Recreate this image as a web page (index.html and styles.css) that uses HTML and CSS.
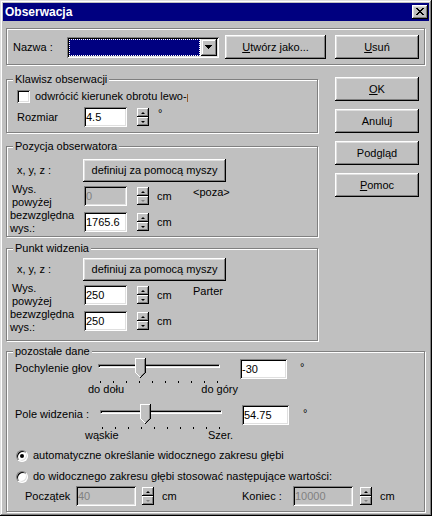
FILE: index.html
```html
<!DOCTYPE html>
<html lang="pl">
<head>
    <meta charset="UTF-8">
    <title>Obserwacja</title>
    <link rel="stylesheet" href="styles.css">
</head>
<body>
<div class="window">
    <div class="titlebar">
        <span class="title">Obserwacja</span>
        <button class="close-btn">
            <svg width="8" height="7" viewBox="0 0 8 7" shape-rendering="crispEdges"><path d="M0 0h2v1H0zM6 0h2v1H6zM1 1h2v1H1zM5 1h2v1H5zM2 2h4v1H2zM3 3h2v1H3zM2 4h4v1H2zM1 5h2v1H1zM5 5h2v1H5zM0 6h2v1H0zM6 6h2v1H6z"/></svg>
        </button>
    </div>

    <div class="content">
        <div class="group top-box">
            <span class="lbl name-lbl">Nazwa :</span>
            <div class="combo">
                <div class="combo-value"></div>
                <div class="combo-btn">
                    <svg width="7" height="4" viewBox="0 0 7 4" shape-rendering="crispEdges"><path d="M0 0h7v1H0zM1 1h5v1H1zM2 2h3v1H2zM3 3h1v1H3z"/></svg>
                </div>
            </div>
            <button class="btn btn-create"><u>U</u>twórz jako...</button>
            <button class="btn btn-delete"><u>U</u>suń</button>
        </div>

        <div class="middle">
            <div class="left-col">
                <div class="group key-box">
                    <span class="group-label">Klawisz obserwacji</span>
                    <div class="check-row">
                        <span class="checkbox"></span>
                        <span class="check-text">odwrócić kierunek obrotu lewo-prawo</span>
                    </div>
                    <div class="row">
                        <span class="lbl size-lbl">Rozmiar</span>
                        <input class="field w-num" type="text" value="4.5">
                        <div class="spin">
                            <span class="spin-part"><i class="arr-up"></i></span>
                            <span class="spin-part"><i class="arr-down"></i></span>
                        </div>
                        <span class="unit deg">°</span>
                    </div>
                </div>

                <div class="group pos-box">
                    <span class="group-label">Pozycja obserwatora</span>
                    <div class="btn-row">
                        <span class="lbl xyz-lbl">x, y, z :</span>
                        <button class="btn btn-mouse">definiuj za pomocą myszy</button>
                    </div>
                    <div class="row">
                        <span class="lbl two-line wys-lbl">Wys.<br>powyżej</span>
                        <input class="field w-num" type="text" value="0" disabled>
                        <div class="spin">
                            <span class="spin-part"><i class="arr-up"></i></span>
                            <span class="spin-part"><i class="arr-down dim"></i></span>
                        </div>
                        <span class="unit cm">cm</span>
                        <span class="note">&lt;poza&gt;</span>
                    </div>
                    <div class="row row-abs">
                        <span class="lbl two-line abs-lbl">bezwzględna<br>wys.:</span>
                        <input class="field w-num" type="text" value="1765.6">
                        <div class="spin">
                            <span class="spin-part"><i class="arr-up"></i></span>
                            <span class="spin-part"><i class="arr-down"></i></span>
                        </div>
                        <span class="unit cm">cm</span>
                    </div>
                </div>

                <div class="group view-box">
                    <span class="group-label">Punkt widzenia</span>
                    <div class="btn-row">
                        <span class="lbl xyz-lbl">x, y, z :</span>
                        <button class="btn btn-mouse">definiuj za pomocą myszy</button>
                    </div>
                    <div class="row row-wys">
                        <span class="lbl two-line wys-lbl">Wys.<br>powyżej</span>
                        <input class="field w-num" type="text" value="250">
                        <div class="spin">
                            <span class="spin-part"><i class="arr-up"></i></span>
                            <span class="spin-part"><i class="arr-down"></i></span>
                        </div>
                        <span class="unit cm">cm</span>
                        <span class="note">Parter</span>
                    </div>
                    <div class="row row-abs">
                        <span class="lbl two-line abs-lbl">bezwzględna<br>wys.:</span>
                        <input class="field w-num" type="text" value="250">
                        <div class="spin">
                            <span class="spin-part"><i class="arr-up"></i></span>
                            <span class="spin-part"><i class="arr-down"></i></span>
                        </div>
                        <span class="unit cm">cm</span>
                    </div>
                </div>
            </div>

            <div class="right-col">
                <button class="btn btn-side"><u>O</u>K</button>
                <button class="btn btn-side">Anuluj</button>
                <button class="btn btn-side">Podgląd</button>
                <button class="btn btn-side"><u>P</u>omoc</button>
            </div>
        </div>

        <div class="group rest-box">
            <span class="group-label">pozostałe dane</span>

            <div class="slider-row">
                <span class="lbl slider-lbl tilt-lbl">Pochylenie głov</span>
                <div class="slider">
                    <div class="track"></div>
                    <div class="ticks"></div>
                    <svg class="thumb" style="left: 37px" width="11" height="21" viewBox="0 0 11 21" shape-rendering="crispEdges">
                        <path fill="#c0c0c0" d="M0 0h11v15l-5 5h-1l-5-5z"/>
                        <path fill="#fff" d="M0 0h10v1H1v14H0z"/>
                        <path fill="#808080" d="M9 1h1v14H9zM8 15h1v1H8zM7 16h1v1H7zM6 17h1v1H6z"/>
                        <path fill="#000" d="M10 0h1v15h-1zM9 15h1v1H9zM8 16h1v1H8zM7 17h1v1H7zM6 18h1v1H6zM5 19h1v1H5z"/>
                        <path fill="#fff" d="M1 15h1v1H1zM2 16h1v1H2zM3 17h1v1H3zM4 18h1v1H4z"/>
                    </svg>
                </div>
                <input class="field w-angle tilt-field" type="text" value="-30">
                <span class="unit deg">°</span>
            </div>
            <div class="slider-ends ends-tilt">
                <span>do dołu</span>
                <span>do góry</span>
            </div>

            <div class="slider-row fov-row">
                <span class="lbl slider-lbl">Pole widzenia :</span>
                <div class="slider">
                    <div class="track"></div>
                    <div class="ticks"></div>
                    <svg class="thumb" style="left: 40px" width="11" height="21" viewBox="0 0 11 21" shape-rendering="crispEdges">
                        <path fill="#c0c0c0" d="M0 0h11v15l-5 5h-1l-5-5z"/>
                        <path fill="#fff" d="M0 0h10v1H1v14H0z"/>
                        <path fill="#808080" d="M9 1h1v14H9zM8 15h1v1H8zM7 16h1v1H7zM6 17h1v1H6z"/>
                        <path fill="#000" d="M10 0h1v15h-1zM9 15h1v1H9zM8 16h1v1H8zM7 17h1v1H7zM6 18h1v1H6zM5 19h1v1H5z"/>
                        <path fill="#fff" d="M1 15h1v1H1zM2 16h1v1H2zM3 17h1v1H3zM4 18h1v1H4z"/>
                    </svg>
                </div>
                <input class="field w-angle" type="text" value="54.75">
                <span class="unit deg deg-fov">°</span>
            </div>
            <div class="slider-ends ends-fov">
                <span>wąskie</span>
                <span>Szer.</span>
            </div>

            <div class="radio-row radio-first">
                <span class="radio checked"></span>
                <span>automatyczne określanie widocznego zakresu głębi</span>
            </div>
            <div class="radio-row">
                <span class="radio"></span>
                <span>do widocznego zakresu głębi stosować następujące wartości:</span>
            </div>

            <div class="row depth-row">
                <span class="lbl start-lbl">Początek</span>
                <input class="field w-depth" type="text" value="40" disabled>
                <div class="spin spin-depth">
                    <span class="spin-part"><i class="arr-up"></i></span>
                    <span class="spin-part"><i class="arr-down dim"></i></span>
                </div>
                <span class="unit cm depth-cm">cm</span>
                <span class="lbl end-lbl">Koniec :</span>
                <input class="field w-depth" type="text" value="10000" disabled>
                <div class="spin spin-depth2">
                    <span class="spin-part"><i class="arr-up"></i></span>
                    <span class="spin-part"><i class="arr-down dim"></i></span>
                </div>
                <span class="unit cm">cm</span>
            </div>
        </div>
    </div>
</div>
</body>
</html>
```

FILE: styles.css
```css
body {
    margin: 0;
    background-color: #c0c0c0;
}
.window {
    width: 432px;
    height: 516px;
    box-sizing: border-box;
    padding: 3px;
    background-color: #c0c0c0;
    box-shadow: inset -1px -1px #000, inset 1px 1px #dfdfdf, inset -2px -2px #808080, inset 2px 2px #fff;
    font-family: "Liberation Sans", Arial, sans-serif;
    font-size: 11px;
    line-height: 13px;
    color: #000;
}
.titlebar {
    height: 18px;
    background-color: #000080;
    color: #fff;
    display: flex;
    align-items: center;
    justify-content: space-between;
    padding: 0 1px 0 2px;
}
.title {
    font-weight: bold;
    font-size: 12px;
}
.close-btn {
    width: 16px;
    height: 14px;
    padding: 0;
    border: 0;
    background-color: #c0c0c0;
    box-shadow: inset -1px -1px #000, inset 1px 1px #fff, inset -2px -2px #808080, inset 2px 2px #dfdfdf;
    display: flex;
    align-items: center;
    justify-content: center;
}
.close-btn svg {
    margin: 0 1px 1px 0;
}
.content {
    padding: 0 4px 0 3px;
}

/* group boxes */
.group {
    position: relative;
    box-sizing: border-box;
    border: 1px solid #808080;
    box-shadow: inset 1px 1px #fff, 1px 1px #fff;
}
.group-label {
    position: absolute;
    top: -7px;
    left: 6px;
    padding: 0 2px;
    background-color: #c0c0c0;
    white-space: nowrap;
}

/* controls */
.btn {
    border: 0;
    padding: 0;
    background-color: #c0c0c0;
    box-shadow: inset -1px -1px #000, inset 1px 1px #fff, inset -2px -2px #808080, inset 2px 2px #dfdfdf;
    font: inherit;
    color: #000;
    height: 24px;
}
.field {
    box-sizing: border-box;
    height: 20px;
    border: 0;
    margin: 0;
    padding: 0 2px;
    background-color: #fff;
    box-shadow: inset 1px 1px #808080, inset -1px -1px #fff, inset 2px 2px #000, inset -2px -2px #dfdfdf;
    font: inherit;
    color: #000;
    outline: none;
}
.field:disabled {
    background-color: #c0c0c0;
    color: #808080;
}
.spin {
    width: 12px;
    height: 18px;
    display: flex;
    flex-direction: column;
    margin-left: 10px;
}
.spin-part {
    height: 9px;
    background-color: #c0c0c0;
    box-shadow: inset -1px -1px #000, inset 1px 1px #fff, inset -2px -2px #808080;
    display: flex;
    align-items: center;
    justify-content: center;
}
.arr-up, .arr-down {
    width: 0;
    height: 0;
    border-left: 2px solid transparent;
    border-right: 2px solid transparent;
    margin-right: 1px;
}
.arr-up {
    border-bottom: 2px solid #000;
}
.arr-down {
    border-top: 2px solid #000;
}
.arr-down.dim {
    border-top-color: #808080;
}
.lbl {
    white-space: nowrap;
    flex: none;
}
.row {
    display: flex;
    align-items: center;
    height: 20px;
}
.unit {
    white-space: nowrap;
}
.deg {
    margin-left: 9px;
    margin-top: -7px;
}
.cm {
    margin-left: 8px;
    width: 36px;
}
.note {
    margin-top: -8px;
}
.w-num {
    width: 43px;
}

/* top row */
.top-box {
    height: 37px;
    margin-top: 7px;
    display: flex;
    align-items: center;
    padding: 1px 0 0 6px;
}
.name-lbl {
    width: 54px;
}
.combo {
    box-sizing: border-box;
    width: 152px;
    height: 21px;
    padding: 2px;
    display: flex;
    background-color: #fff;
    box-shadow: inset 1px 1px #808080, inset -1px -1px #fff, inset 2px 2px #000, inset -2px -2px #dfdfdf;
}
.combo-value {
    flex: 1;
    border: 1px dotted #fff;
    background-color: #000080;
    margin-right: 1px;
}
.combo-btn {
    width: 16px;
    height: 17px;
    background-color: #c0c0c0;
    box-shadow: inset -1px -1px #000, inset 1px 1px #dfdfdf, inset -2px -2px #808080, inset 2px 2px #fff;
    display: flex;
    align-items: center;
    justify-content: center;
}
.combo-btn svg {
    margin-right: 1px;
}
.btn-create {
    width: 101px;
    margin-left: 6px;
}
.btn-delete {
    width: 84px;
    margin-left: 9px;
}

/* middle part */
.middle {
    display: flex;
    margin-top: 12px;
}
.left-col {
    width: 312px;
    padding-top: 2px;
}
.right-col {
    display: flex;
    flex-direction: column;
    gap: 8px;
    margin-left: 17px;
}
.btn-side {
    width: 84px;
}
.key-box {
    height: 54px;
    padding: 10px 0 0 10px;
}
.check-row {
    display: flex;
    align-items: center;
    height: 13px;
    margin-bottom: 4px;
}
.checkbox {
    box-sizing: border-box;
    width: 13px;
    height: 13px;
    background-color: #fff;
    box-shadow: inset 1px 1px #808080, inset -1px -1px #fff, inset 2px 2px #000, inset -2px -2px #dfdfdf;
    flex: none;
}
.check-text {
    margin-left: 5px;
    width: 153px;
    overflow: hidden;
    white-space: nowrap;
}
.size-lbl {
    width: 67px;
}
.pos-box {
    height: 91px;
    margin-top: 13px;
    padding: 12px 0 0 10px;
}
.view-box {
    height: 93px;
    margin-top: 11px;
    padding: 9px 0 0 10px;
}
.btn-row {
    display: flex;
    align-items: center;
    height: 23px;
    margin-bottom: 4px;
}
.btn-row .btn {
    height: 23px;
}
.xyz-lbl {
    width: 66px;
}
.btn-mouse {
    width: 143px;
}
.two-line {
    line-height: 13px;
}
.wys-lbl {
    width: 72px;
    margin-left: -5px;
}
.abs-lbl {
    width: 74px;
    margin-left: -7px;
}
.row-abs {
    margin-top: 6px;
}
.view-box .row-wys {
    margin-top: 3px;
}

/* other data */
.rest-box {
    height: 161px;
    margin-top: 10px;
    padding: 6px 0 0 8px;
}
.slider-row {
    display: flex;
    align-items: flex-start;
    height: 24px;
}
.slider-lbl {
    width: 85px;
    margin-top: 4px;
}
.tilt-lbl {
    width: 83px;
}
.slider {
    position: relative;
    width: 122px;
    height: 24px;
}
.track {
    height: 4px;
    margin-top: 6px;
    box-sizing: border-box;
    border-top: 1px solid #808080;
    border-left: 1px solid #808080;
    border-bottom: 1px solid #fff;
    border-right: 1px solid #fff;
    box-shadow: inset 1px 1px #000;
    background-color: #dfdfdf;
}
.ticks {
    width: 118px;
    height: 2px;
    margin: 13px 0 0 2px;
    background: repeating-linear-gradient(to right, #000 0 1px, transparent 1px 13px);
}
.thumb {
    position: absolute;
    top: 0;
}
.slider-row .field {
    margin: 1px 0 0 20px;
}
.w-angle {
    width: 47px;
}
.slider-row .deg {
    margin: 3px 0 0 13px;
}
.slider-row .deg-fov {
    margin-left: 14px;
}
.slider-ends {
    display: flex;
    justify-content: space-between;
    margin-top: 1px;
    height: 13px;
}
.ends-tilt {
    width: 150px;
    margin-left: 73px;
}
.ends-fov {
    width: 148px;
    margin-left: 70px;
}
.fov-row {
    margin-top: 8px;
}
.radio-row {
    display: flex;
    align-items: center;
    height: 13px;
    margin-top: 8px;
    margin-left: 1px;
    white-space: nowrap;
}
.radio-first {
    margin-top: 7px;
}
.radio {
    box-sizing: border-box;
    width: 12px;
    height: 12px;
    border-radius: 50%;
    border: 1px solid;
    border-color: #808080 #fff #fff #808080;
    background-color: #fff;
    box-shadow: inset 1px 1px #000, inset -1px -1px #dfdfdf;
    margin-right: 5px;
    flex: none;
    display: flex;
    align-items: center;
    justify-content: center;
}
.radio.checked::after {
    content: "";
    width: 4px;
    height: 4px;
    border-radius: 50%;
    background-color: #000;
}
.depth-row {
    margin-top: 3px;
}
.start-lbl {
    width: 51px;
    margin-left: 10px;
}
.w-depth {
    width: 60px;
}
.spin-depth {
    margin-left: 6px;
}
.spin-depth2 {
    margin-left: 7px;
}
.depth-cm {
    width: 80px;
}
.end-lbl {
    width: 51px;
}
```
